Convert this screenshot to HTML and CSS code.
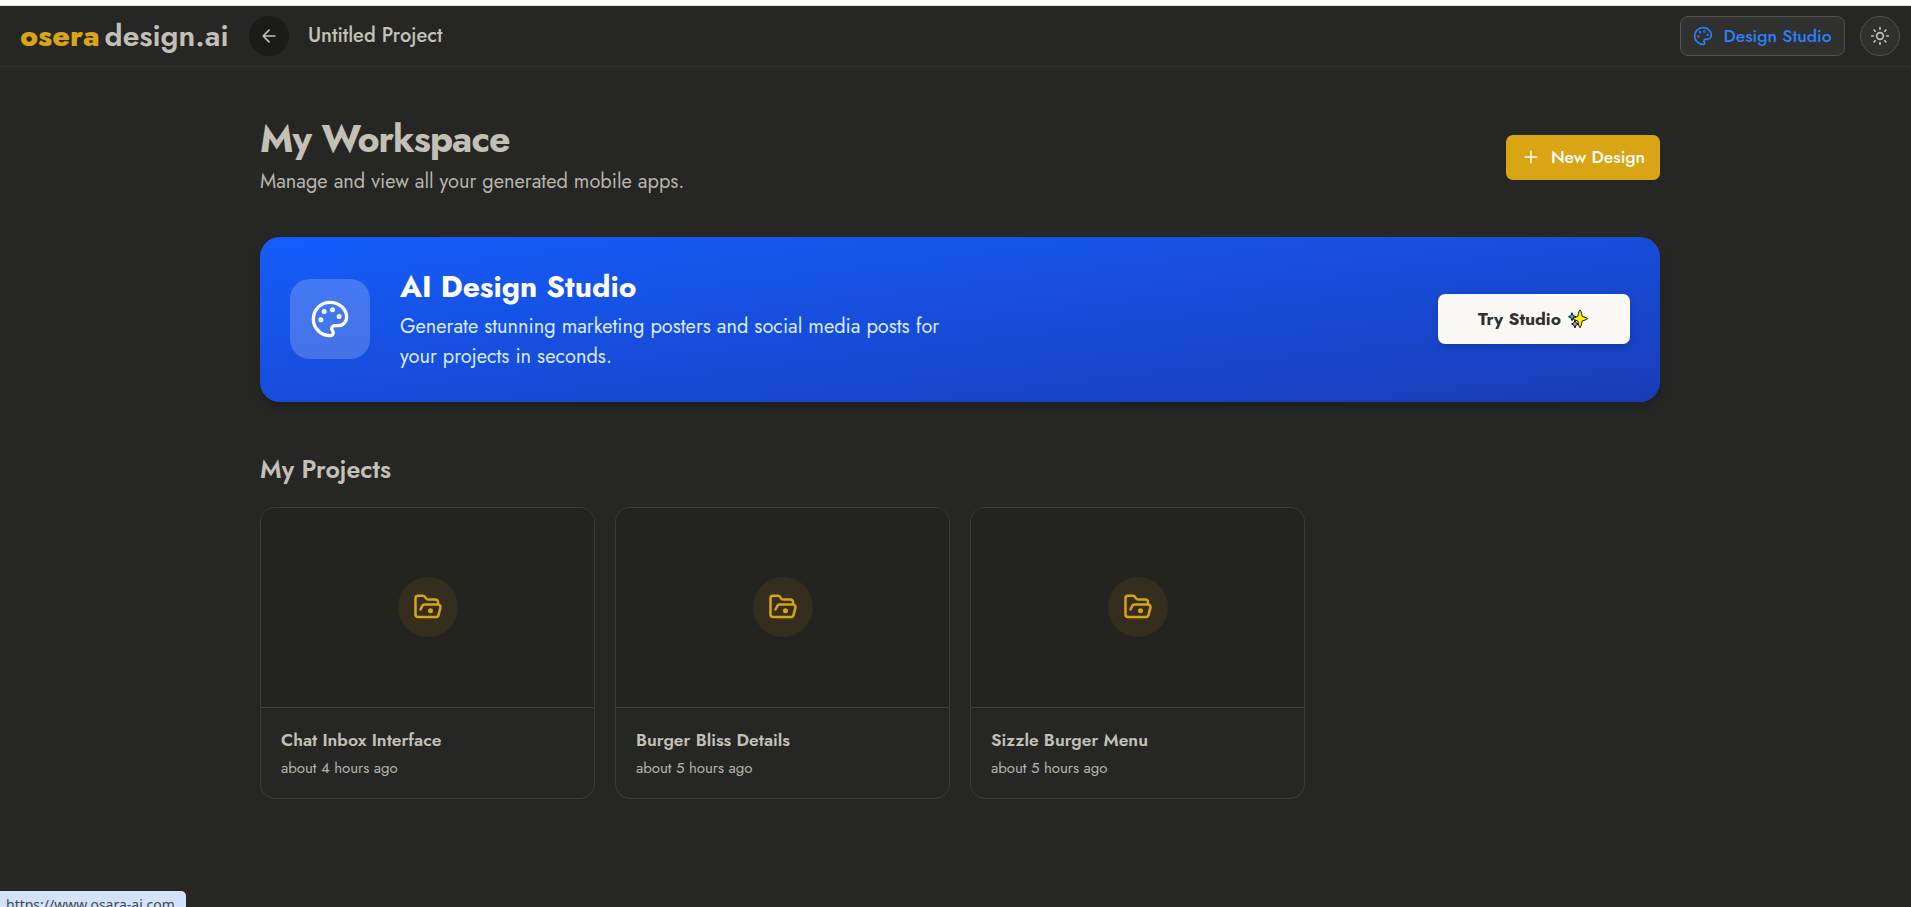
FILE: index.html
```html
<!DOCTYPE html>
<html lang="en">
<head>
<meta charset="utf-8">
<title>osera design.ai</title>
<link rel="stylesheet" href="styles.css">
</head>
<body>
<svg class="sprite" aria-hidden="true">
  <symbol id="palette" viewBox="0 0 24 24"><path d="M12 22a1 1 0 0 1 0-20 10 9 0 0 1 10 9 5 5 0 0 1-5 5h-2.250a1.750 1.750 0 0 0-1.400 2.800l.3.4a1.750 1.750 0 0 1-1.400 2.800z"/><circle cx="13.500" cy="6.500" r=".5" fill="currentColor"/><circle cx="17.500" cy="10.500" r=".5" fill="currentColor"/><circle cx="6.500" cy="12.500" r=".5" fill="currentColor"/><circle cx="8.500" cy="7.500" r=".5" fill="currentColor"/></symbol>
  <symbol id="folder" viewBox="0 0 24 24"><path d="m6 14 1.450-2.900A2 2 0 0 1 9.240 10H20a2 2 0 0 1 1.940 2.500l-1.550 6a2 2 0 0 1-1.940 1.500H4a2 2 0 0 1-2-2V5c0-1.100.9-2 2-2h3.930a2 2 0 0 1 1.660.9l.82 1.200a2 2 0 0 0 1.660.9H18a2 2 0 0 1 2 2v2"/><circle cx="14" cy="15" r="1"/></symbol>
</svg>
<div class="strip"></div>
<header class="topbar">
  <div class="logo"><span class="logo-a">osera</span><span class="logo-b">design.ai</span></div>
  <button class="back" aria-label="Back"><svg class="icon" viewBox="0 0 24 24"><path d="m12 19-7-7 7-7M19 12H5"/></svg></button>
  <div class="project">Untitled Project</div>
  <button class="studio-link"><svg class="icon"><use href="#palette"/></svg><span>Design Studio</span></button>
  <button class="theme" aria-label="Theme"><svg class="icon" viewBox="0 0 24 24"><circle cx="12" cy="12" r="4"/><path d="M12 2v2M12 20v2M4.930 4.930l1.410 1.410M17.660 17.660l1.410 1.410M2 12h2M20 12h2M6.340 17.660l-1.410 1.410M19.070 4.930l-1.410 1.410"/></svg></button>
</header>
<main class="page">
  <section class="intro">
    <div class="heading">
      <h1>My Workspace</h1>
      <p class="lead">Manage and view all your generated mobile apps.</p>
    </div>
    <button class="new"><svg class="icon" viewBox="0 0 24 24"><path d="M5 12h14M12 5v14"/></svg><span>New Design</span></button>
  </section>
  <section class="banner">
    <div class="tile"><svg class="icon"><use href="#palette"/></svg></div>
    <div class="pitch">
      <h2>AI Design Studio</h2>
      <p>Generate stunning marketing posters and social media posts for<br>your projects in seconds.</p>
    </div>
    <button class="try"><span>Try Studio</span>
      <svg class="sparkles" viewBox="0 0 20 20"><path class="cyan" d="M4 3.700 5.100 6.600 8 7.700 5.100 8.800 4 11.700 2.900 8.800.500 7.700 2.900 6.600Z"/><path class="pink" d="M7 11 8.100 13.900 11 15 8.100 16.100 7 19 5.900 16.100 3.500 15 5.900 13.900Z"/><path class="yellow" d="M12 .800Q12.800 .800 14.200 7.400 19.500 9 19.500 9.700 19.500 10.400 14.200 12 12.800 18.800 12 18.800 11.200 18.800 9.800 12 5 10.400 5 9.700 5 9 9.800 7.400 11.200 .800 12 .800Z"/></svg>
    </button>
  </section>
  <h3>My Projects</h3>
  <section class="grid">
    <article class="card">
      <div class="preview"><div class="badge"><svg class="icon"><use href="#folder"/></svg></div></div>
      <div class="meta"><h4>Chat Inbox Interface</h4><p>about 4 hours ago</p></div>
    </article>
    <article class="card">
      <div class="preview"><div class="badge"><svg class="icon"><use href="#folder"/></svg></div></div>
      <div class="meta"><h4>Burger Bliss Details</h4><p>about 5 hours ago</p></div>
    </article>
    <article class="card">
      <div class="preview"><div class="badge"><svg class="icon"><use href="#folder"/></svg></div></div>
      <div class="meta"><h4>Sizzle Burger Menu</h4><p>about 5 hours ago</p></div>
    </article>
  </section>
</main>
<div class="status">https://www.osara-ai.com</div>
</body>
</html>
```
FILE: styles.css
```css
* { box-sizing: border-box; margin: 0; }

body {
  height: 907px;
  overflow: hidden;
  position: relative;
  background: #262624;
  color: #c3c0b6;
  font-family: "Jost", "Lato", sans-serif;
  font-size: 20px;
}

button { border: 0; padding: 0; font: inherit; color: inherit; display: flex; align-items: center; justify-content: center; white-space: nowrap; }
h1, h2, h3, h4, p { white-space: nowrap; }
.sprite { display: none; }
.icon { fill: none; stroke: currentColor; stroke-width: 2; stroke-linecap: round; stroke-linejoin: round; width: 20px; height: 20px; flex: none; }

.strip { height: 6px; background: #fff; border-bottom: 1px solid #dde5dc; }

.topbar { height: 61px; display: flex; align-items: center; padding: 0 11px 0 20px; border-bottom: 1px solid #30302e; }
.logo { width: 229px; display: flex; gap: 5px; font-size: 30px; line-height: 40px; }
.logo-a { color: #d9a514; font-weight: 800; }
.logo-b { font-weight: 600; }
.back { width: 40px; height: 40px; border-radius: 50%; background: #1b1b19; }
.project { flex: 1; padding-left: 19px; font-weight: 500; line-height: 30px; }
.studio-link { width: 165px; height: 40px; gap: 10px; border: 1px solid #52514a; border-radius: 8px; background: #30302e; color: #2b7fff; font-size: 17.5px; font-weight: 500; }
.theme { width: 40px; height: 40px; margin-left: 15px; border: 1px solid #52514a; border-radius: 50%; background: #30302e; }

.page { width: 1400px; margin-left: 260px; padding-top: 48px; }
.intro { display: flex; align-items: center; justify-content: space-between; height: 85px; }
.heading { padding-bottom: 1px; }
h1 { font-size: 37.5px; line-height: 45px; font-weight: 700; letter-spacing: -.025em; }
.lead { margin-top: 5px; line-height: 30px; color: #b7b5a9; }
.new { width: 154px; height: 45px; padding-bottom: 1px; gap: 10px; border-radius: 7px; background: #d9a514; color: #fff; font-size: 17.5px; font-weight: 500; }
.new .icon { stroke-width: 1.7; }

.banner { margin-top: 36.5px; height: 165px; border-radius: 20px; padding: 0 30px; display: flex; align-items: center; background: linear-gradient(to bottom right, #155dfc, #193cb8); color: #fff; box-shadow: 0 5px 8px -1px rgba(0,0,0,.2); }
.tile { width: 80px; height: 80px; border-radius: 20px; background: rgba(255,255,255,.2); display: flex; align-items: center; justify-content: center; }
.tile .icon { width: 40px; height: 40px; }
.pitch { flex: 1; padding-left: 30px; }
h2 { margin-bottom: 5px; font-size: 30px; line-height: 40px; font-weight: 700; }
.pitch p { line-height: 30px; color: #dbeafe; }
.try { width: 192px; height: 50px; padding-right: 2px; gap: 7px; border-radius: 7px; background: #faf9f5; color: #30302e; font-size: 17.5px; font-weight: 700; box-shadow: 0 3px 6px rgba(0,0,0,.15); }
.sparkles { width: 20px; height: 20px; stroke: #111; stroke-width: 1; stroke-linejoin: round; }
.cyan { fill: #32b8e8; }
.pink { fill: #e87fa8; }
.yellow { fill: #fff100; }

h3 { margin-top: 50px; font-size: 25px; line-height: 35px; font-weight: 600; }
.grid { margin-top: 20px; display: grid; grid-template-columns: repeat(4, 1fr); gap: 20px; }
.card { height: 292px; border: 1px solid #3e3e38; border-radius: 15px; overflow: hidden; }
.preview { height: 200px; background: #23241f; border-bottom: 1px solid #3e3e38; display: flex; align-items: center; justify-content: center; }
.badge { width: 60px; height: 60px; border-radius: 50%; background: #352e1e; color: #d9a514; display: flex; align-items: center; justify-content: center; }
.badge .icon { width: 30px; height: 30px; }
.meta { padding: 19px 20px; }
h4 { font-size: 17.5px; line-height: 27px; font-weight: 600; }
.meta p { margin-top: 4px; font-size: 15px; line-height: 21px; color: #b7b5a9; }

/* Browser link preview, partly below the window's bottom edge */
.status { position: absolute; left: 0; bottom: 0; width: 186px; height: 16px; padding-left: 6px; border-radius: 0 5px 0 0; background: #d3e3fd; color: #474747; font: 14px/28px "Noto Sans", sans-serif; overflow: hidden; white-space: nowrap; }
```
